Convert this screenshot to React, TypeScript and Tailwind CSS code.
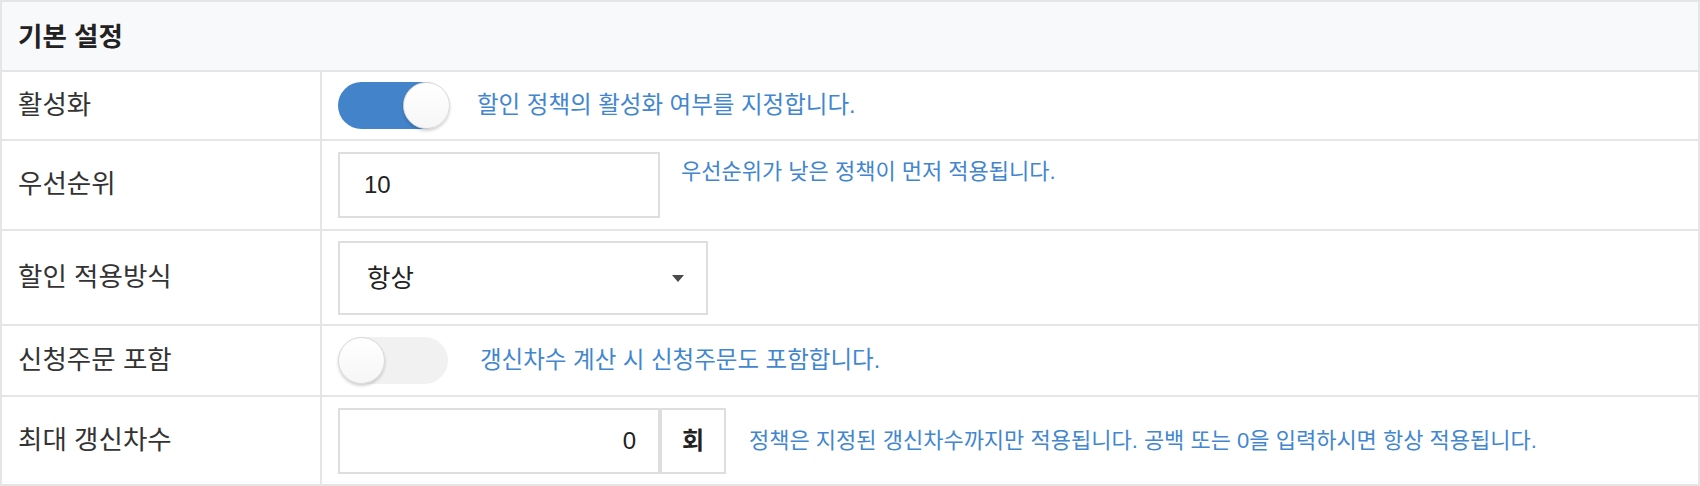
import { useState, type ReactNode } from 'react';

const Toggle = ({ on, onChange }: { on: boolean; onChange: () => void }) => (
  <button
    type="button"
    onClick={onChange}
    className={`relative h-[47px] w-[110px] shrink-0 rounded-full ${on ? 'bg-[#4283c9]' : 'bg-[#f1f1f1]'}`}
  >
    <span
      className={`absolute top-0 h-[47px] w-[47px] rounded-full border border-[#d9d9d9] bg-gradient-to-b from-white to-[#f6f6f6] shadow-[0_2px_3px_rgba(0,0,0,0.18)] ${
        on ? 'right-[-2px]' : 'left-0'
      }`}
    />
  </button>
);

const Row = ({ label, height, children }: { label: string; height: string; children: ReactNode }) => (
  <div className={`flex border-t-2 border-[#e5e5e5] ${height}`}>
    <div className="flex w-[320px] shrink-0 items-center border-r-2 border-[#e5e5e5] pl-4 text-[26.5px] text-[#333]">
      {label}
    </div>
    {children}
  </div>
);

// help text next to toggles is set a little larger than the one next to inputs
const Help = ({ large, children }: { large?: boolean; children: ReactNode }) => (
  <p className={`leading-[1.5] text-[#4186cf] ${large ? 'text-[23.5px]' : 'text-[22px]'}`}>{children}</p>
);

const App = () => {
  const [active, setActive] = useState(true);
  const [includeApply, setIncludeApply] = useState(false);
  const [priority, setPriority] = useState('10');
  const [maxCount, setMaxCount] = useState('0');

  return (
    <div className="h-[486px] w-[1700px] border-2 border-[#e5e5e5] bg-white font-['Liberation_Sans','Noto_Sans_CJK_KR',sans-serif]">
      {/* Header */}
      <div className="flex h-[68px] items-center bg-[#f8f9fb] pl-4 pt-[3px] text-[26.5px] font-bold text-[#222]">기본 설정</div>

      <Row label="활성화" height="h-[69px]">
        <div className="flex items-center gap-[29px] pl-4">
          <Toggle on={active} onChange={() => setActive(!active)} />
          <Help large>할인 정책의 활성화 여부를 지정합니다.</Help>
        </div>
      </Row>

      <Row label="우선순위" height="h-[90px]">
        <div className="flex items-start gap-[21px] pl-4 pt-[11px]">
          <input
            value={priority}
            onChange={(e) => setPriority(e.target.value)}
            className="h-[66px] w-[322px] border-2 border-[#dedede] px-6 text-[24px] text-[#222] outline-none"
          />
          <div className="pt-[3px]">
            <Help>우선순위가 낮은 정책이 먼저 적용됩니다.</Help>
          </div>
        </div>
      </Row>

      <Row label="할인 적용방식" height="h-[95px]">
        <div className="pl-4 pt-[10px]">
          <div className="flex h-[74px] w-[370px] items-center justify-between border-2 border-[#dedede] pl-[27px] pr-[22px] text-[25.5px] text-[#222]">
            <span>항상</span>
            <svg width="12" height="7" viewBox="0 0 12 7">
              <path d="M0 0h12L6 7z" fill="#4a4a4a" />
            </svg>
          </div>
        </div>
      </Row>

      <Row label="신청주문 포함" height="h-[71px]">
        <div className="flex items-center gap-[32px] pl-4">
          <Toggle on={includeApply} onChange={() => setIncludeApply(!includeApply)} />
          <Help large>갱신차수 계산 시 신청주문도 포함합니다.</Help>
        </div>
      </Row>

      <Row label="최대 갱신차수" height="h-[89px]">
        <div className="flex items-center pl-4">
          <input
            value={maxCount}
            onChange={(e) => setMaxCount(e.target.value)}
            className="h-[66px] w-[322px] border-2 border-[#dedede] px-[22px] text-right text-[24px] text-[#222] outline-none"
          />
          <div className="flex h-[66px] w-[66px] items-center justify-center border-2 border-[#dedede] text-[24px] font-bold text-[#222]">
            회
          </div>
          <div className="ml-[23px]">
            <Help>정책은 지정된 갱신차수까지만 적용됩니다. 공백 또는 0을 입력하시면 항상 적용됩니다.</Help>
          </div>
        </div>
      </Row>
    </div>
  );
};

export default App;
